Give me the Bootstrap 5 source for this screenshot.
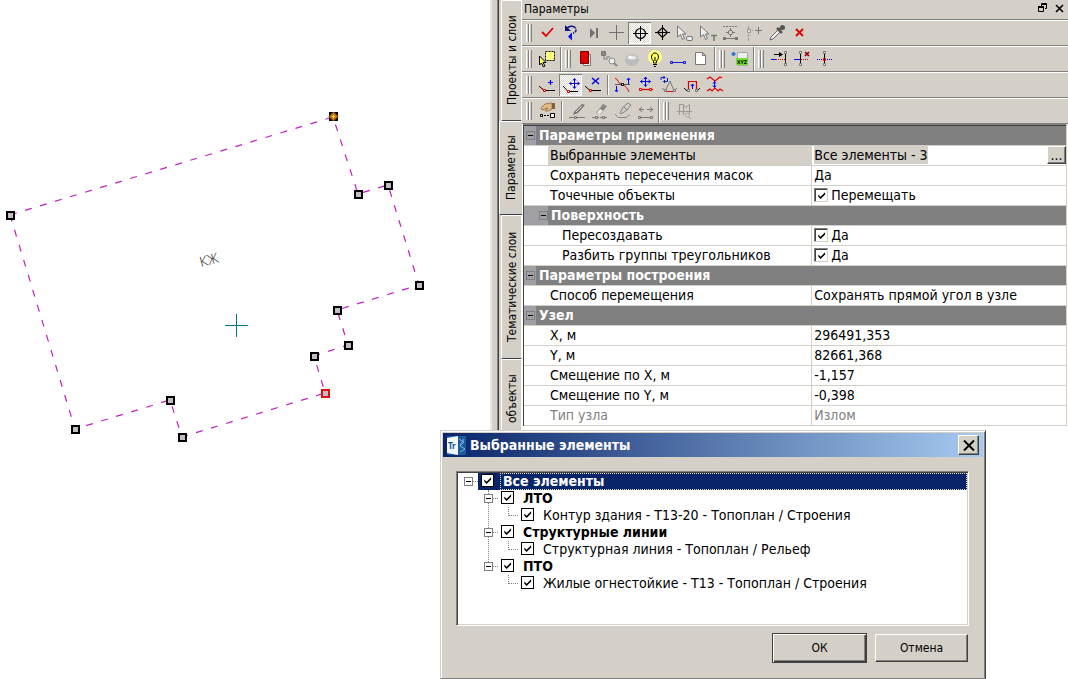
<!DOCTYPE html>
<html lang="ru">
<head>
<meta charset="utf-8">
<meta name="viewport" content="width=device-width, initial-scale=1">
<title>Параметры</title>
<link href="https://cdn.jsdelivr.net/npm/bootstrap@5.3.0/dist/css/bootstrap.min.css" rel="stylesheet">
<style>
:root{--face:#d4d0c8;--shade:#808080;--dark:#404040;--navy:#0a246a}
body{font-family:"DejaVu Sans Condensed","DejaVu Sans",sans-serif;font-size:14px;line-height:18px;color:#000;background:#fff}
.workspace{display:grid;grid-template-columns:490fr 578fr;min-height:100vh}
.map svg{display:block}
.dock{border-left:2px solid #ece9e2;height:430px;overflow:hidden}
.splitter{width:7px;background:var(--face);border-right:1px solid var(--dark);box-shadow:inset -1px 0 var(--shade)}
.tabs{width:23px;background:var(--face)}
.side-tab{flex:none;writing-mode:vertical-rl;transform:rotate(180deg);border:0;background:var(--face);padding:0;font-size:12px;line-height:20px;color:#000;text-align:center;border-right:1px solid #fff;border-bottom:1px solid #fff;border-top:1px solid var(--dark);border-left:1px solid #fff;border-radius:0 2px 2px 0;margin-left:2px}
.side-tab.current{margin-left:0;border-left:0}
.t1{height:121px}.t2{height:94px}.t3{height:144px}.t4{height:80px}
.caption-bar{height:20px;background:var(--face);border-bottom:1px solid var(--shade);padding:0 1px 0 2px;font-size:12px}
.caption-bar button{border:0;background:none;padding:0;width:16px;height:16px;line-height:0}
.bar{height:26px;background:var(--face);border-top:1px solid #fff;border-bottom:1px solid var(--shade)}
.group{padding:1px 1px 1px 3px;border-left:1px solid #fff;border-right:1px solid var(--shade)}
.group:first-child{border-left-color:transparent}
.group:last-child{border-right:0}
.grip{width:6px;height:18px;margin:2px 4px 0 0;border:solid;border-width:0 1px 0 0;border-color:var(--shade);background:linear-gradient(90deg,#fff 1px,var(--face) 1px 2px,var(--shade) 2px 3px,#fff 3px 4px,var(--face) 4px)}
.tool{width:23px;height:22px;border:0;padding:0;background:none;line-height:0}
.tool.on{background:repeating-conic-gradient(#fff 0 25%,#dcd9d3 0 50%) 0 0/2px 2px;box-shadow:inset 1px 1px var(--shade),inset -1px -1px #fff}
.tool svg{width:23px;height:22px;fill:none;stroke-width:1;overflow:visible}
.rule{width:2px;height:20px;margin:1px 2px;border-left:1px solid var(--shade);border-right:1px solid #fff}
.props{width:100%;border-collapse:separate;border-spacing:0;table-layout:fixed;border-top:1px solid var(--dark);margin:0}
.props-wrap{border-top:1px solid var(--shade);border-left:1px solid var(--dark);border-right:1px solid var(--face);margin-right:1px;background:#fff;margin-left:1px}
.props col.name{width:53%}
.props td,.props th{height:20px;padding:0 2px;line-height:18px;vertical-align:top;border-bottom:1px solid var(--face);white-space:nowrap;font-weight:400;overflow:hidden;text-align:left}
.props th{padding-left:26px}
.props th.deep{padding-left:38px}
.props td{border-left:1px solid var(--face)}
.props .sec th{background:var(--shade);color:#fff;font-weight:700;padding-left:0}
.props .hot th{background:linear-gradient(90deg,#fff 24px,var(--face) 24px)}
.props .off{color:#808080}
.lead-cell{background:#a0a0a4;width:12px;height:19px;margin-right:3px;display:inline-flex;align-items:center;justify-content:center;vertical-align:top}
.lead-cell.in{width:24px;justify-content:flex-end}
.fold{width:9px;height:9px;border:1px solid #808080;background:transparent;padding:0;position:relative;flex:none;display:block}
.fold::after{content:"";position:absolute;left:1px;right:1px;top:3px;height:1px;background:#000}
.picked{background:var(--face)}
.more{width:19px;height:18px;line-height:10px;padding:0;border:1px solid;border-color:#fff var(--dark) var(--dark) #fff;box-shadow:inset -1px -1px var(--shade);background:var(--face)}
.tick{appearance:none;width:14px;height:14px;margin:0 3px 0 0;background:#fff url("data:image/svg+xml,%3Csvg xmlns='http://www.w3.org/2000/svg' viewBox='0 0 10 10'%3E%3Cpath d='M1.5 4v2.500l2.500 2.500 5-5V1.500L4 6.500z'/%3E%3C/svg%3E") center/9px no-repeat;border:1px solid;border-color:var(--shade) var(--face) var(--face) var(--shade);box-shadow:inset 1px 1px var(--dark);vertical-align:-2px}
.dialog-box{position:absolute;right:82px;top:430px;width:546px;height:249px;background:var(--face);border:1px solid;border-color:var(--face) var(--dark) var(--shade) var(--face);box-shadow:inset 1px 1px #fff,inset -1px 0 var(--shade);padding:2px}
.dialog-title{height:24px;background:linear-gradient(90deg,var(--navy),#a6caf0);color:#fff;font-weight:700;padding:0 4px}
.btn-raised{border:1px solid;border-color:#fff var(--dark) var(--dark) #fff;box-shadow:inset -1px -1px var(--shade);background:var(--face);padding:0;color:#000;border-radius:0;font-size:12px}
.x-btn{width:21px;height:20px;line-height:0}
.push{width:93px;height:28px}
.push.main{width:95px;height:30px;border:1px solid var(--dark);box-shadow:inset 1px 1px #fff,inset -1px -1px var(--dark),inset -2px -2px var(--shade)}
.tree-box{margin:14px 14px 0 13px;height:155px;background:#fff;border:1px solid;border-color:var(--shade) #fff #fff var(--shade);box-shadow:inset 1px 1px var(--dark),inset -1px -1px var(--face);padding:1px}
.tree-box ul{list-style:none;margin:0;padding:0 0 0 20px;position:relative}
.tree-box ul.root{padding:0}
.twig{height:17px;line-height:17px;display:flex;align-items:center}
.joint{width:20px;height:17px;display:flex;align-items:center;padding-left:6px;flex:none;position:relative}
.joint::after{content:"";flex:1;border-top:1px dotted #808080}
.joint.leaf{padding-left:10px}
.joint.leaf::before{content:"";position:absolute;left:10px;top:0;height:9px;border-left:1px dotted #808080}
.kids::before{content:"";position:absolute;left:30px;top:0;height:76px;border-left:1px dotted #808080}
.kids .fold,.root>li>.twig .fold{background:#fff;z-index:1}
.twig label{display:flex;align-items:center;flex:1;height:17px;padding-left:3px}
.twig .tick{width:13px;height:13px;margin:0 6px 3px 0;border:1px solid #000;box-shadow:none;flex:none}
.twig .cap{padding-left:3px;line-height:17px;flex:1}
.sel label{background:var(--navy);color:#fff}
.sel .cap{outline:1px dotted #e8e0b0;outline-offset:-1px}
.actions{padding:7px 15px 0 0}
</style>
</head>
<body>
<main class="workspace position-relative">
<section class="map" aria-label="План">
<svg width="490" height="450" viewBox="0 0 490 450" fill="none">
<path d="M10 215 333 117 358 194 388 185 419 285 337 310 348 345 314 356 325 393 182 437 170 400 75 429Z" stroke="#c020c0" stroke-width="1.200" stroke-dasharray="7 8.700"/>
<path d="M225 325.500h23M236.500 314v23" stroke="#007a7a"/>
<text x="201" y="267" transform="rotate(-15 201 267)" font-size="14" font-family="Open Sans, Noto Sans, sans-serif" font-weight="300" fill="#222">КЖ</text>
<g fill="#c4bcc4" stroke="#000" stroke-width="2">
<path d="M7 212h7v7h-7zM355 191h7v7h-7zM385 182h7v7h-7zM416 282h7v7h-7zM334 307h7v7h-7zM345 342h7v7h-7zM311 353h7v7h-7zM179 434h7v7h-7zM167 397h7v7h-7zM72 426h7v7h-7z"/>
<path d="M322 390h7v7h-7z" stroke="#e01010"/>
<path d="M330 113h7v7h-7z" fill="#000"/>
</g>
<path d="M333.500 112 338 116.500 333.500 121 329 116.500z" fill="#c87820" stroke="#8c4c10"/><path d="M333.500 115v3M332 116.500h3" stroke="#ffe030"/>
</svg>
</section>
<section class="dock d-flex">
<div class="splitter flex-shrink-0"></div>
<nav class="tabs d-flex flex-column flex-shrink-0" aria-label="Вкладки">
<button class="side-tab t1">Проекты и слои</button>
<button class="side-tab t2 current">Параметры</button>
<button class="side-tab t3">Тематические слои</button>
<button class="side-tab t4">объекты</button>
</nav>
<div class="flex-grow-1">
<header class="caption-bar d-flex align-items-start"><span class="me-auto">Параметры</span>
<button aria-label="Восстановить"><svg width="10" height="10" viewBox="0 0 10 10" fill="none" stroke="#000"><path d="M3.500 3V.5h5v5H7M3 1.500h6M.5 4v4.500h5V4"/><path d="M0 4h6" stroke-width="2"/></svg></button>
<button aria-label="Закрыть"><svg width="9" height="9" viewBox="0 0 9 9" stroke="#000" stroke-width="1.600"><path d="M1 1l7 7M8 1l-7 7"/></svg></button></header>

<div class="bar d-flex"><div class="group d-flex"><span class="grip"></span>
<button class="tool" aria-label="Применить"><svg viewBox="0 0 23 22"><path d="M6 10l4 4 7-8" stroke="#e00000" stroke-width="1.800"/></svg></button>
<button class="tool" aria-label="Отменить"><svg viewBox="0 0 23 22"><path d="M8 6c3-3 8-2 9 1 .5 2-1 4-3 4" stroke="#101080" stroke-width="1.500" stroke-dasharray="10 1 3 1"/><path d="M6 3v6h6z" fill="#101080"/><path d="M9 14.500l4-4v8z" fill="#00f"/></svg></button>
<button class="tool" aria-label="Далее"><svg viewBox="0 0 23 22"><path d="M8 6v10l5-5z" fill="#707070"/><path d="M15 6v10" stroke="#707070" stroke-width="2"/></svg></button>
<button class="tool" aria-label="Точка"><svg viewBox="0 0 23 22"><path d="M4 10.500h15M11.500 3v15" stroke="#707070"/></svg></button>
<button class="tool on" aria-label="Захват узла"><svg viewBox="0 0 23 22"><circle cx="12.500" cy="11.500" r="5" stroke="#000" stroke-width="1.200"/><path d="M5 11.500h15M12.500 4v15" stroke="#000"/></svg></button>
<button class="tool" aria-label="Захват линии"><svg viewBox="0 0 23 22"><path d="M11.500 5.500l5 5-5 5-5-5z" stroke="#000" stroke-width="1.200"/><path d="M4 10.500h15M11.500 3v15" stroke="#000"/></svg></button>
<button class="tool" aria-label="Выбор объекта"><svg viewBox="0 0 23 22"><path d="M3.500 4v11l3-2.500 2 5 2-1-2-4.500h3.500z" stroke="#777" fill="#eee"/><rect x="12.500" y="14.500" width="6" height="4" rx="1.500" stroke="#777" fill="#eee"/></svg></button>
<button class="tool" aria-label="Выбор текста"><svg viewBox="0 0 23 22"><path d="M3.500 4v11l3-2.500 2 5 2-1-2-4.500h3.500z" stroke="#777" fill="#eee"/><path d="M14 13.500h6M17 13v6" stroke="#777" stroke-width="1.500"/></svg></button>
<button class="tool" aria-label="Середина"><svg viewBox="0 0 23 22"><path d="M3 4.500h15" stroke="#777" stroke-dasharray="2 1"/><path d="M10.500 7.500l3 3-3 3-3-3zM10.500 6v3M10.500 12v3M6 10.500h3M12 10.500h3M3 16.500h15" stroke="#777"/><path d="M3 15h3v3H3zM15 15h3v3h-3z" fill="#777"/></svg></button>
<button class="tool" aria-label="Продолжение"><svg viewBox="0 0 23 22"><path d="M5.500 4v15" stroke="#999" stroke-dasharray="3 1"/><path d="M7 8.500h4" stroke="#999" stroke-dasharray="1 1"/><path d="M12 8.500h7M15.500 5v7" stroke="#777"/><path d="M4.500 7.500h3v3h-3z" stroke="#999" fill="#ddd"/></svg></button>
<button class="tool" aria-label="Пипетка"><svg viewBox="0 0 23 22"><path d="M4 18l1-3 7-7 2 2-7 7z" stroke="#666" fill="#eee"/><path d="M11 6l5 5M13 8l3-3" stroke="#555" stroke-width="2.500"/><circle cx="16.500" cy="5.500" r="2.500" fill="#555"/></svg></button>
<button class="tool" aria-label="Сброс"><svg viewBox="0 0 23 22"><path d="M7 7l7 7M14 7l-7 7" stroke="#e00000" stroke-width="1.800"/></svg></button>
</div></div>

<div class="bar d-flex"><div class="group d-flex"><span class="grip"></span>
<button class="tool" aria-label="Выбор рамкой"><svg viewBox="0 0 23 22"><path d="M9.500 3.500h9v9h-9z" fill="#ffff80" stroke="#000" stroke-dasharray="2 1"/><path d="M3.500 8v9l2-2 2 4 1.500-1-2-3.500h3z" fill="#ffff60" stroke="#000"/></svg></button></div>
<div class="group d-flex"><span class="grip"></span>
<button class="tool" aria-label="Слой"><svg viewBox="0 0 23 22"><path d="M8.500 6.500h7v11h-7z" stroke="#777" fill="#eee"/><path d="M5.500 3.500h8v12h-8z" fill="#e00000" stroke="#700"/></svg></button>
<button class="tool" aria-label="Поиск"><svg viewBox="0 0 23 22"><path d="M3.500 3.500h4v4h-4z" fill="#888" stroke="#777"/><path d="M6 8v3h3v-2h3" stroke="#999" stroke-width="1.500"/><circle cx="14" cy="13" r="3" stroke="#888" fill="#eee"/><path d="M16 15l3 3" stroke="#888" stroke-width="2"/></svg></button>
<button class="tool" aria-label="Видимость"><svg viewBox="0 0 23 22"><ellipse cx="11" cy="12" rx="7" ry="6" fill="#bcbcbc"/><path d="M6 10q5-5 10 0-5 3-10 0" fill="#e8e8e8"/><circle cx="9" cy="9" r="1.500" fill="#fff"/></svg></button>
<button class="tool" aria-label="Подсветка"><svg viewBox="0 0 23 22"><circle cx="11" cy="9" r="7" fill="#ffff80"/><path d="M9.500 13c-3.500-3-2-8 1.500-8s5 5 1.500 8v2h-3z" fill="#ffff60" stroke="#000"/><path d="M9 16.500h4M10 18.500h2M11 9v4" stroke="#000"/></svg></button>
<button class="tool" aria-label="Отрезок"><svg viewBox="0 0 23 22"><path d="M4 14.500h14" stroke="#1414e0"/><path d="M3.500 13.500h2v2h-2zM16.500 13.500h2v2h-2z" stroke="#1414e0" fill="#d4d0c8"/></svg></button>
<button class="tool" aria-label="Новый"><svg viewBox="0 0 23 22"><path d="M5.500 4.500h7l3 3v9h-10zM12.500 4.500v3h3" fill="#fff" stroke="#777"/></svg></button></div>
<div class="group d-flex"><span class="grip"></span>
<button class="tool" aria-label="Координаты XYZ"><svg viewBox="0 0 23 22"><path d="M8.500 4.500h10v13h-10z" fill="#eee" stroke="#aaa"/><path d="M7 10h12v7H7z" fill="#70e030"/><text x="8" y="16" font-size="5" font-weight="700" fill="#000">XYZ</text><path d="M4.500 4v4M2.500 6h4" stroke="#3070e0" stroke-width="2"/></svg></button></div>
<div class="group d-flex"><span class="grip"></span>
<button class="tool" aria-label="Продлить"><svg viewBox="0 0 23 22"><path d="M6 6.500h8" stroke="#000"/><path d="M11 4l4 2.500L11 9z" fill="#000"/><path d="M3 11.500h5" stroke="#00f"/><path d="M8 11.500h9" stroke="#e00000" stroke-dasharray="1 1"/><path d="M17.500 5v13" stroke="#000"/><path d="M16.500 3.500h2v2h-2zM16.500 15.500h2v2h-2z" fill="#eee" stroke="#777"/></svg></button>
<button class="tool" aria-label="Обрезать"><svg viewBox="0 0 23 22"><path d="M3 11.500h6" stroke="#00f"/><path d="M10 11.500h8" stroke="#e00000" stroke-dasharray="1 1"/><path d="M9.500 5v13" stroke="#000"/><path d="M8.500 3.500h2v2h-2zM8.500 15.500h2v2h-2z" fill="#eee" stroke="#777"/><path d="M14 4l4 4M18 4l-4 4" stroke="#900000" stroke-width="1.700"/></svg></button>
<button class="tool" aria-label="Пересечение"><svg viewBox="0 0 23 22"><path d="M3 11.500h16" stroke="#00f" stroke-dasharray="1 1"/><path d="M10.500 5v13" stroke="#000"/><path d="M9.500 3.500h2v2h-2zM9.500 15.500h2v2h-2z" fill="#eee" stroke="#777"/><path d="M9.500 10.500h2v2h-2z" stroke="#e00000"/></svg></button></div></div>

<div class="bar d-flex"><div class="group d-flex"><span class="grip"></span>
<button class="tool" aria-label="Добавить узел"><svg viewBox="0 0 23 22"><path d="M3 12l5 4.500h11" stroke="#000"/><path d="M5 13.500l3 3" stroke="#d00"/><path d="M7.500 15.500h2v2h-2z" stroke="#e00000" fill="#fff"/><path d="M14.500 6v5M12 8.500h5" stroke="#00f" stroke-width="1.200"/></svg></button>
<button class="tool on" aria-label="Переместить узел"><svg viewBox="0 0 23 22"><path d="M4 12l5 5.500h10" stroke="#000"/><path d="M8.500 16.500h2v2h-2z" stroke="#e00000" fill="#fff"/><path d="M15.500 5v9M11 9.500h9M14 6.500l1.500-2 1.500 2M14 12.500l1.500 2 1.500-2M12.500 8l-2 1.500 2 1.500M18.500 8l2 1.500-2 1.500" stroke="#0000e0"/></svg></button>
<button class="tool" aria-label="Удалить узел"><svg viewBox="0 0 23 22"><path d="M3 12l5 4.500h11" stroke="#000"/><path d="M7.500 15.500h2v2h-2z" stroke="#e00000" fill="#fff"/><path d="M10 4l7 6M17 4l-7 6" stroke="#0000e0" stroke-width="1.500"/></svg></button>
<span class="rule"></span>
<button class="tool" aria-label="Сгладить"><svg viewBox="0 0 23 22"><path d="M4 4c3 1 3 5 6 6s6 3 8 8" stroke="#e00000"/><path d="M4 10.500h15" stroke="#555"/><path d="M10.500 9.500h2v2h-2z" stroke="#000" fill="#fff"/><path d="M5.500 12v6M4 16l1.500 2L7 16M17.500 10V4M16 6l1.500-2L19 6" stroke="#00f"/></svg></button>
<button class="tool" aria-label="Переместить сегмент"><svg viewBox="0 0 23 22"><path d="M5 15.500h14" stroke="#e00000" stroke-width="1.300"/><path d="M5.500 14.500h2v2h-2zM15.500 14.500h2v2h-2z" stroke="#e00000" fill="#fff"/><path d="M11.500 3v9M6.500 7.500h10M10 5l1.500-2L13 5M10 10.500l1.500 2 1.500-2M8.500 6l-2 1.500 2 1.500M14.500 6l2 1.500-2 1.500" stroke="#0000e0"/></svg></button>
<button class="tool" aria-label="Повернуть сегмент"><svg viewBox="0 0 23 22"><path d="M5 14l3 3 5-10 4 10 3-3" stroke="#777"/><path d="M8 17.500h8" stroke="#e00000"/><path d="M7.500 15.500h2v2h-2zM16.500 15.500h2v2h-2z" fill="#ddd" stroke="#777"/><path d="M4 6V3.500h4M6.500 2l1.500 1.500L6.500 5M10.500 4v3.500h-4M8 6L6.500 7.500 8 9" stroke="#0020d0"/></svg></button>
<button class="tool" aria-label="Поднять"><svg viewBox="0 0 23 22"><path d="M4 14l3 3M20 14l-3 3" stroke="#000"/><path d="M8.500 16V7.500h8V16" stroke="#e00000" stroke-width="1.200"/><path d="M7.500 15.500h2v2h-2zM15.500 15.500h2v2h-2z" fill="#ddd" stroke="#777"/><path d="M12.500 15v-5M11 12l1.500-2 1.500 2" stroke="#00f"/></svg></button>
<button class="tool" aria-label="Параллельно"><svg viewBox="0 0 23 22"><path d="M4 5l3-2 5 4 5-4 2 1M4 17l3-2 2 2 3-3 3 3 2-2 3 2" stroke="#e00000" stroke-width="1.200"/><path d="M11.500 8v5M10 9.500l1.500-2 1.500 2M10 11.500l1.500 2 1.500-2" stroke="#00f"/></svg></button>
</div></div>

<div class="bar d-flex"><div class="group d-flex"><span class="grip"></span>
<button class="tool" aria-label="Свойства узла"><svg viewBox="0 0 23 22"><path d="M5 8l4-4 7-1v6l-4 2H9l3-3-3 1-3 1z" fill="#e0b888" stroke="#a07850"/><path d="M16 3h3v6h-3" fill="#80603c"/><path d="M4.500 14.500h2v2h-2zM14.500 13.500h4v4h-4z" stroke="#000" fill="#fff"/><path d="M8 15.500h5" stroke="#000" stroke-dasharray="2 1"/></svg></button>
<span class="rule"></span>
<button class="tool" aria-label="Карандаш"><svg viewBox="0 0 23 22"><path d="M9 12l8-8 3 1-7 8-5 2z" fill="#777"/><path d="M11 12l6-6" stroke="#ddd"/><path d="M4 17.500h16" stroke="#777"/><path d="M9.500 16.500h2v2h-2z" fill="#ddd" stroke="#777"/></svg></button>
<button class="tool" aria-label="Ластик"><svg viewBox="0 0 23 22"><path d="M8 13l7-9 4 2-6 8z" fill="#888"/><path d="M9 13l3-4 3 2-3 3z" fill="#eee"/><path d="M4 17.500h16" stroke="#777" stroke-dasharray="3 1"/><path d="M7.500 16.500h2v2h-2zM14.500 16.500h2v2h-2z" fill="#ddd" stroke="#777"/></svg></button>
<button class="tool" aria-label="Кисть"><svg viewBox="0 0 23 22"><path d="M9 13l3-6 5-4 3 2-4 5-6 4z" fill="#ccc" stroke="#888"/><path d="M13 7l3 3" stroke="#777"/><path d="M4 14l3 3.500h8l4-3" stroke="#888"/></svg></button>
<button class="tool" aria-label="Растянуть"><svg viewBox="0 0 23 22"><path d="M5 9.500h5M8 7L5 9.500 8 12M13 9.500h6M16 7l3 2.500-3 2.500M5 17.500h13" stroke="#777"/><path d="M4.500 16.500h2v2h-2zM16.500 16.500h2v2h-2z" fill="#ddd" stroke="#777"/></svg></button></div>
<div class="group d-flex"><span class="grip"></span>
<button class="tool" aria-label="Профиль"><svg viewBox="0 0 23 22"><path d="M6.500 4v11M6.500 4.500h4l2 3 4-3v9M10.500 5v10M4 11.500h15M15 16l3 3" stroke="#999"/><circle cx="14.500" cy="15" r="2" stroke="#aaa"/></svg></button></div></div>

<div class="props-wrap">
<table class="props"><colgroup><col class="name"><col></colgroup><tbody>
<tr class="sec"><th colspan="2"><span class="lead-cell"><button class="fold" aria-label="Свернуть"></button></span>Параметры применения</th></tr>
<tr class="hot"><th>Выбранные элементы</th><td class="pe-0"><div class="d-flex align-items-center"><span class="picked me-auto">Все элементы - 3</span><button class="more">...</button></div></td></tr>
<tr><th>Сохранять пересечения масок</th><td>Да</td></tr>
<tr><th>Точечные объекты</th><td><label><input class="tick" type="checkbox" checked>Перемещать</label></td></tr>
<tr class="sec"><th colspan="2"><span class="lead-cell in"><button class="fold" aria-label="Свернуть"></button></span>Поверхность</th></tr>
<tr><th class="deep">Пересоздавать</th><td><label><input class="tick" type="checkbox" checked>Да</label></td></tr>
<tr><th class="deep">Разбить группы треугольников</th><td><label><input class="tick" type="checkbox" checked>Да</label></td></tr>
<tr class="sec"><th colspan="2"><span class="lead-cell"><button class="fold" aria-label="Свернуть"></button></span>Параметры построения</th></tr>
<tr><th>Способ перемещения</th><td>Сохранять прямой угол в узле</td></tr>
<tr class="sec"><th colspan="2"><span class="lead-cell"><button class="fold" aria-label="Свернуть"></button></span>Узел</th></tr>
<tr><th>X, м</th><td>296491,353</td></tr>
<tr><th>Y, м</th><td>82661,368</td></tr>
<tr><th>Смещение по X, м</th><td>-1,157</td></tr>
<tr><th>Смещение по Y, м</th><td>-0,398</td></tr>
<tr><th class="off">Тип узла</th><td class="off">Излом</td></tr>
</tbody></table></div>
</div>
</section>

<section class="dialog-box" role="dialog" aria-label="Выбранные элементы">
<header class="dialog-title d-flex align-items-center"><svg class="flex-shrink-0" width="19" height="19" viewBox="0 0 19 19"><path d="M0 0h19v19H0z" fill="#1c5aa0"/><path d="M0 2l11-2v19L0 17z" fill="#f4f8fc"/><text x="1" y="13" font-size="8" font-weight="700" fill="#1c5aa0">Tr</text><path d="M12 3l5 3-4 4 5 3-5 3M17 3l-4 6" stroke="#7ab0e0" fill="none"/></svg><span class="ms-1 me-auto">Выбранные элементы</span>
<button class="btn-raised x-btn" aria-label="Закрыть"><svg width="12" height="11" viewBox="0 0 12 11" stroke="#000" stroke-width="2"><path d="M1 .5l10 10M11 .5l-10 10"/></svg></button></header>
<div class="tree-box">
<ul class="root"><li><div class="twig sel"><span class="joint"><button class="fold" aria-label="Свернуть"></button></span><label><input class="tick" type="checkbox" checked><b class="cap">Все элементы</b></label></div>
<ul class="kids">
<li><div class="twig"><span class="joint"><button class="fold" aria-label="Свернуть"></button></span><label><input class="tick" type="checkbox" checked><b class="cap">ЛТО</b></label></div>
<ul><li class="twig"><span class="joint leaf"></span><label><input class="tick" type="checkbox" checked><span class="cap">Контур здания - Т13-20 - Топоплан / Строения</span></label></li></ul></li>
<li><div class="twig"><span class="joint"><button class="fold" aria-label="Свернуть"></button></span><label><input class="tick" type="checkbox" checked><b class="cap">Структурные линии</b></label></div>
<ul><li class="twig"><span class="joint leaf"></span><label><input class="tick" type="checkbox" checked><span class="cap">Структурная линия - Топоплан / Рельеф</span></label></li></ul></li>
<li><div class="twig"><span class="joint"><button class="fold" aria-label="Свернуть"></button></span><label><input class="tick" type="checkbox" checked><b class="cap">ПТО</b></label></div>
<ul><li class="twig"><span class="joint leaf"></span><label><input class="tick" type="checkbox" checked><span class="cap">Жилые огнестойкие - Т13 - Топоплан / Строения</span></label></li></ul></li>
</ul></li></ul>
</div>
<footer class="actions d-flex justify-content-end align-items-center gap-2"><button class="btn-raised push main">ОК</button><button class="btn-raised push">Отмена</button></footer>
</section>
</main>
<script src="https://cdn.jsdelivr.net/npm/bootstrap@5.3.0/dist/js/bootstrap.bundle.min.js"></script>
</body>
</html>
